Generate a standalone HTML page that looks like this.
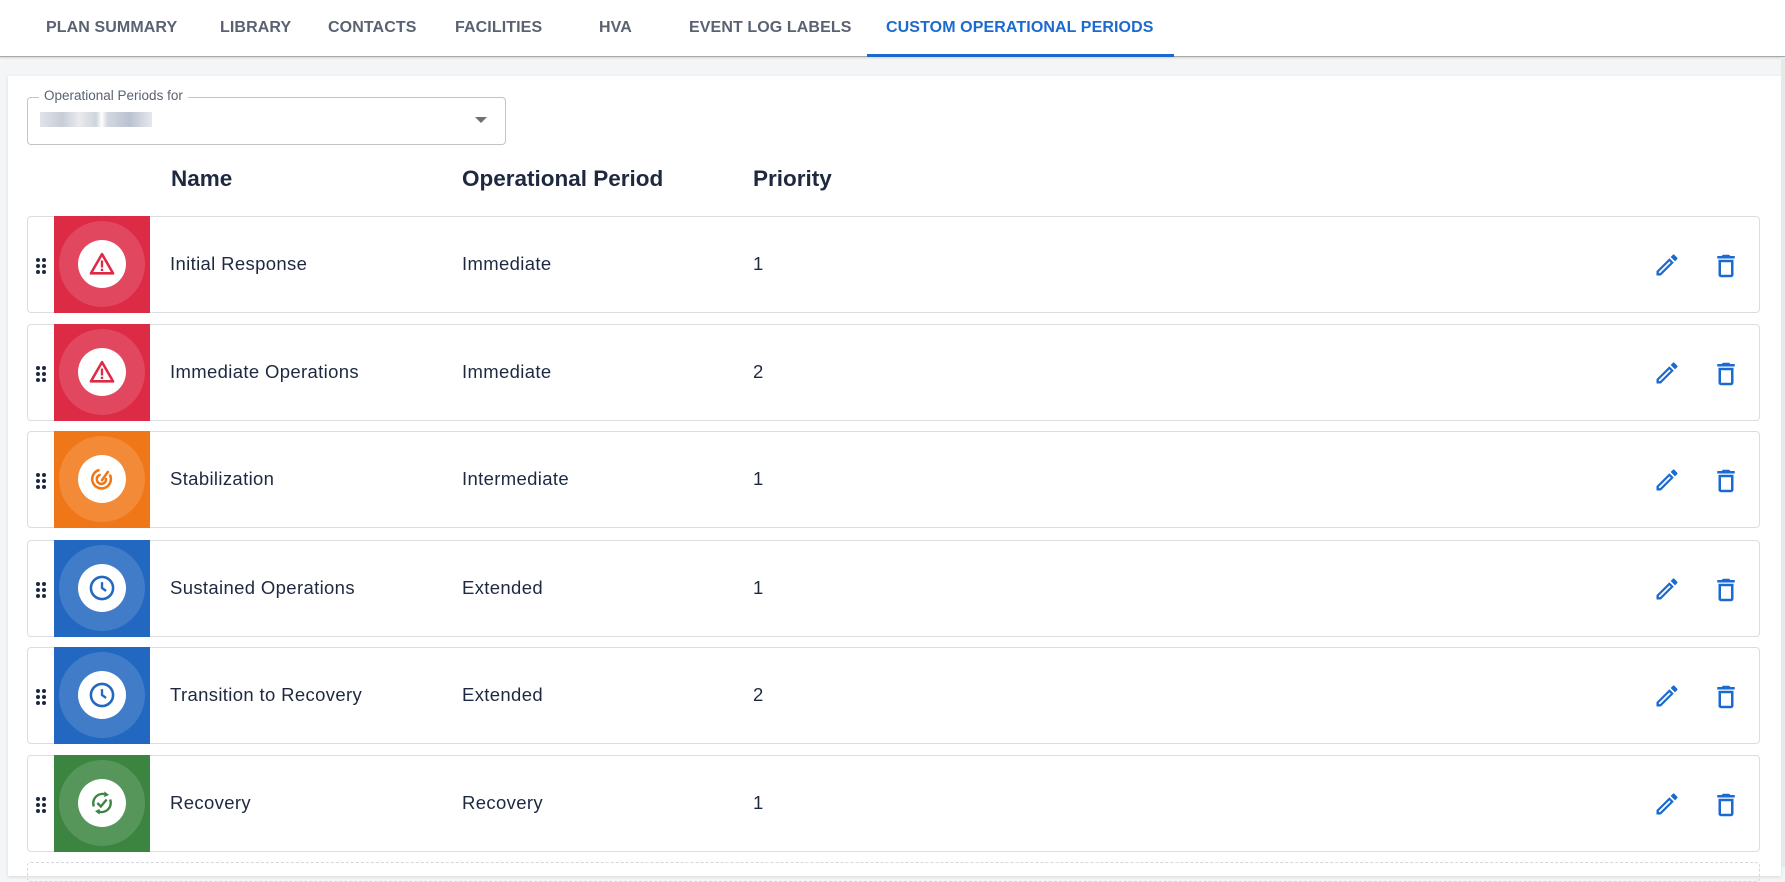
<!DOCTYPE html>
<html><head><meta charset="utf-8"><style>
*{box-sizing:border-box;margin:0;padding:0}
body{width:1785px;height:867px;overflow:hidden;background:#f4f5f7;font-family:"Liberation Sans",sans-serif;position:relative;color:#1e2940}
.top{position:absolute;left:0;top:0;width:1785px;height:57px;background:#fff;border-bottom:1px solid #a9a9a9;box-shadow:0 1px 2px rgba(0,0,0,.15)}
.tab{position:absolute;top:19px;font-size:16px;font-weight:bold;color:#5a6272;letter-spacing:.1px;white-space:nowrap}
.tab.act{color:#1b6ad0}
.ul{position:absolute;left:867px;top:54px;width:307px;height:3px;background:#1b6ad0}
.card{position:absolute;left:8px;top:76px;width:1773px;height:800px;background:#fff;box-shadow:0 1px 3px rgba(0,0,0,.12)}
.dd{position:absolute;left:27px;top:97px;width:479px;height:48px;border:1px solid #c4c4c4;border-radius:4px}
.lbl{position:absolute;left:39px;top:88px;background:#fff;padding:0 5px;font-size:13.5px;color:#5a6272}
.blur{position:absolute;left:40px;top:112px;width:112px;height:15px;background:linear-gradient(90deg,#d8dbe2,#b9c0cd 20%,#e4e6ea 35%,#c3c8d2 50%,#fff 55%,#c9ced7 60%,#a9b3c5 80%,#dfe2e8);opacity:.8}
.arr{position:absolute;left:475px;top:117px;width:0;height:0;border-left:6px solid transparent;border-right:6px solid transparent;border-top:6px solid #707070}
.h{position:absolute;top:166px;font-size:22.5px;font-weight:bold;color:#1e2940}
.row{position:absolute;left:27px;width:1733px;height:97px;border:1px solid #dcdde2;border-radius:4px;background:#fff}
.blk{position:absolute;left:26px;top:-1px;width:96px;height:97px;overflow:hidden}
.halo{position:absolute;left:5px;top:5px;width:86px;height:86px;border-radius:50%;background:rgba(255,255,255,.14)}
.wc{position:absolute;left:24px;top:24px;width:48px;height:48px;border-radius:50%;background:#fff}
.wc svg{position:absolute;left:10px;top:10px}
.t{position:absolute;top:36px;font-size:18.5px;color:#1e2940;letter-spacing:.35px}
.dots{position:absolute;left:7px;top:40px}
.ic{position:absolute;top:34px}
.dash{position:absolute;left:27px;top:862px;width:1733px;height:20px;border:1px dashed #d6d7dc;border-radius:4px}
.sb{position:absolute;left:1781px;top:57px;width:4px;height:810px;background:#e8e8e8}
</style></head><body>
<div class="top">
<span class="tab" style="left:46px">PLAN SUMMARY</span>
<span class="tab" style="left:220px">LIBRARY</span>
<span class="tab" style="left:328px">CONTACTS</span>
<span class="tab" style="left:455px">FACILITIES</span>
<span class="tab" style="left:599px">HVA</span>
<span class="tab" style="left:689px">EVENT LOG LABELS</span>
<span class="tab act" style="left:886px">CUSTOM OPERATIONAL PERIODS</span>
<div class="ul"></div>
</div>
<div class="card"></div>
<div class="sb"></div>
<div class="dd"></div><div class="lbl">Operational Periods for</div><div class="blur"></div><div class="arr"></div>
<div class="h" style="left:171px">Name</div>
<div class="h" style="left:462px">Operational Period</div>
<div class="h" style="left:753px">Priority</div>

<div class="row" style="top:216px"><svg class="dots" width="12" height="18"><g fill="#1e2940"><circle cx="3" cy="3" r="2"/><circle cx="9" cy="3" r="2"/><circle cx="3" cy="9" r="2"/><circle cx="9" cy="9" r="2"/><circle cx="3" cy="15" r="2"/><circle cx="9" cy="15" r="2"/></g></svg>
<div class="blk" style="background:#dd2b45"><div class="halo"></div><div class="wc"><svg width="28" height="28" viewBox="0 0 24 24"><path d="M12 3.5L2.5 20h19z" fill="none" stroke="#dd2b45" stroke-width="2.2" stroke-linejoin="round"/><rect x="11" y="9" width="2" height="6" fill="#dd2b45"/><rect x="11" y="16" width="2" height="2" fill="#dd2b45"/></svg></div></div>
<div class="t" style="left:142px">Initial Response</div><div class="t" style="left:434px">Immediate</div><div class="t" style="left:725px">1</div>
<svg class="ic" style="left:1625px" width="28" height="28" viewBox="0 0 24 24"><path d="M3 17.25V21h3.75L17.81 9.94l-3.75-3.75L3 17.25zM20.71 7.04a1 1 0 000-1.41l-2.34-2.34a1 1 0 00-1.41 0l-1.83 1.83 3.75 3.75 1.83-1.83z" fill="#1b6ad0"/><path d="M5 17.9L14.06 8.84l1.1 1.1L6.1 19H5z" fill="#fff"/></svg>
<svg class="ic" style="left:1683px" width="30" height="30" viewBox="0 0 24 24"><path d="M6 19a2 2 0 002 2h8a2 2 0 002-2V7H6v12zM8 9h8v10H8V9zm7.5-5l-1-1h-5l-1 1H5v2h14V4z" fill="#1b6ad0"/></svg></div>

<div class="row" style="top:324px"><svg class="dots" width="12" height="18"><g fill="#1e2940"><circle cx="3" cy="3" r="2"/><circle cx="9" cy="3" r="2"/><circle cx="3" cy="9" r="2"/><circle cx="9" cy="9" r="2"/><circle cx="3" cy="15" r="2"/><circle cx="9" cy="15" r="2"/></g></svg>
<div class="blk" style="background:#dd2b45"><div class="halo"></div><div class="wc"><svg width="28" height="28" viewBox="0 0 24 24"><path d="M12 3.5L2.5 20h19z" fill="none" stroke="#dd2b45" stroke-width="2.2" stroke-linejoin="round"/><rect x="11" y="9" width="2" height="6" fill="#dd2b45"/><rect x="11" y="16" width="2" height="2" fill="#dd2b45"/></svg></div></div>
<div class="t" style="left:142px">Immediate Operations</div><div class="t" style="left:434px">Immediate</div><div class="t" style="left:725px">2</div>
<svg class="ic" style="left:1625px" width="28" height="28" viewBox="0 0 24 24"><path d="M3 17.25V21h3.75L17.81 9.94l-3.75-3.75L3 17.25zM20.71 7.04a1 1 0 000-1.41l-2.34-2.34a1 1 0 00-1.41 0l-1.83 1.83 3.75 3.75 1.83-1.83z" fill="#1b6ad0"/><path d="M5 17.9L14.06 8.84l1.1 1.1L6.1 19H5z" fill="#fff"/></svg>
<svg class="ic" style="left:1683px" width="30" height="30" viewBox="0 0 24 24"><path d="M6 19a2 2 0 002 2h8a2 2 0 002-2V7H6v12zM8 9h8v10H8V9zm7.5-5l-1-1h-5l-1 1H5v2h14V4z" fill="#1b6ad0"/></svg></div>

<div class="row" style="top:431px"><svg class="dots" width="12" height="18"><g fill="#1e2940"><circle cx="3" cy="3" r="2"/><circle cx="9" cy="3" r="2"/><circle cx="3" cy="9" r="2"/><circle cx="9" cy="9" r="2"/><circle cx="3" cy="15" r="2"/><circle cx="9" cy="15" r="2"/></g></svg>
<div class="blk" style="background:#f07718"><div class="halo"></div><div class="wc"><svg width="28" height="28" viewBox="0 0 24 24"><g fill="none" stroke="#f07718" stroke-width="2.2" stroke-linecap="round"><path d="M9 4.5A8 8 0 1019 9"/><path d="M10 8.5A4 4 0 1015.5 12"/><path d="M12 13L17 6"/></g></svg></div></div>
<div class="t" style="left:142px">Stabilization</div><div class="t" style="left:434px">Intermediate</div><div class="t" style="left:725px">1</div>
<svg class="ic" style="left:1625px" width="28" height="28" viewBox="0 0 24 24"><path d="M3 17.25V21h3.75L17.81 9.94l-3.75-3.75L3 17.25zM20.71 7.04a1 1 0 000-1.41l-2.34-2.34a1 1 0 00-1.41 0l-1.83 1.83 3.75 3.75 1.83-1.83z" fill="#1b6ad0"/><path d="M5 17.9L14.06 8.84l1.1 1.1L6.1 19H5z" fill="#fff"/></svg>
<svg class="ic" style="left:1683px" width="30" height="30" viewBox="0 0 24 24"><path d="M6 19a2 2 0 002 2h8a2 2 0 002-2V7H6v12zM8 9h8v10H8V9zm7.5-5l-1-1h-5l-1 1H5v2h14V4z" fill="#1b6ad0"/></svg></div>

<div class="row" style="top:540px"><svg class="dots" width="12" height="18"><g fill="#1e2940"><circle cx="3" cy="3" r="2"/><circle cx="9" cy="3" r="2"/><circle cx="3" cy="9" r="2"/><circle cx="9" cy="9" r="2"/><circle cx="3" cy="15" r="2"/><circle cx="9" cy="15" r="2"/></g></svg>
<div class="blk" style="background:#2267c0"><div class="halo"></div><div class="wc"><svg width="28" height="28" viewBox="0 0 24 24"><circle cx="12" cy="12" r="9.5" fill="none" stroke="#2267c0" stroke-width="2.2"/><path d="M12 7v5l3.5 2.5" fill="none" stroke="#2267c0" stroke-width="2"/></svg></div></div>
<div class="t" style="left:142px">Sustained Operations</div><div class="t" style="left:434px">Extended</div><div class="t" style="left:725px">1</div>
<svg class="ic" style="left:1625px" width="28" height="28" viewBox="0 0 24 24"><path d="M3 17.25V21h3.75L17.81 9.94l-3.75-3.75L3 17.25zM20.71 7.04a1 1 0 000-1.41l-2.34-2.34a1 1 0 00-1.41 0l-1.83 1.83 3.75 3.75 1.83-1.83z" fill="#1b6ad0"/><path d="M5 17.9L14.06 8.84l1.1 1.1L6.1 19H5z" fill="#fff"/></svg>
<svg class="ic" style="left:1683px" width="30" height="30" viewBox="0 0 24 24"><path d="M6 19a2 2 0 002 2h8a2 2 0 002-2V7H6v12zM8 9h8v10H8V9zm7.5-5l-1-1h-5l-1 1H5v2h14V4z" fill="#1b6ad0"/></svg></div>

<div class="row" style="top:647px"><svg class="dots" width="12" height="18"><g fill="#1e2940"><circle cx="3" cy="3" r="2"/><circle cx="9" cy="3" r="2"/><circle cx="3" cy="9" r="2"/><circle cx="9" cy="9" r="2"/><circle cx="3" cy="15" r="2"/><circle cx="9" cy="15" r="2"/></g></svg>
<div class="blk" style="background:#2267c0"><div class="halo"></div><div class="wc"><svg width="28" height="28" viewBox="0 0 24 24"><circle cx="12" cy="12" r="9.5" fill="none" stroke="#2267c0" stroke-width="2.2"/><path d="M12 7v5l3.5 2.5" fill="none" stroke="#2267c0" stroke-width="2"/></svg></div></div>
<div class="t" style="left:142px">Transition to Recovery</div><div class="t" style="left:434px">Extended</div><div class="t" style="left:725px">2</div>
<svg class="ic" style="left:1625px" width="28" height="28" viewBox="0 0 24 24"><path d="M3 17.25V21h3.75L17.81 9.94l-3.75-3.75L3 17.25zM20.71 7.04a1 1 0 000-1.41l-2.34-2.34a1 1 0 00-1.41 0l-1.83 1.83 3.75 3.75 1.83-1.83z" fill="#1b6ad0"/><path d="M5 17.9L14.06 8.84l1.1 1.1L6.1 19H5z" fill="#fff"/></svg>
<svg class="ic" style="left:1683px" width="30" height="30" viewBox="0 0 24 24"><path d="M6 19a2 2 0 002 2h8a2 2 0 002-2V7H6v12zM8 9h8v10H8V9zm7.5-5l-1-1h-5l-1 1H5v2h14V4z" fill="#1b6ad0"/></svg></div>

<div class="row" style="top:755px"><svg class="dots" width="12" height="18"><g fill="#1e2940"><circle cx="3" cy="3" r="2"/><circle cx="9" cy="3" r="2"/><circle cx="3" cy="9" r="2"/><circle cx="9" cy="9" r="2"/><circle cx="3" cy="15" r="2"/><circle cx="9" cy="15" r="2"/></g></svg>
<div class="blk" style="background:#3b8541"><div class="halo"></div><div class="wc"><svg width="28" height="28" viewBox="0 0 24 24"><g fill="none" stroke="#3b8541" stroke-width="2"><path d="M5 15A8 8 0 0116 5"/><path d="M19 9A8 8 0 018 19"/><path d="M8 12l3 3 5-6"/></g><path d="M14 2l4 3-4 2z M10 22l-4-3 4-2z" fill="#3b8541"/></svg></div></div>
<div class="t" style="left:142px">Recovery</div><div class="t" style="left:434px">Recovery</div><div class="t" style="left:725px">1</div>
<svg class="ic" style="left:1625px" width="28" height="28" viewBox="0 0 24 24"><path d="M3 17.25V21h3.75L17.81 9.94l-3.75-3.75L3 17.25zM20.71 7.04a1 1 0 000-1.41l-2.34-2.34a1 1 0 00-1.41 0l-1.83 1.83 3.75 3.75 1.83-1.83z" fill="#1b6ad0"/><path d="M5 17.9L14.06 8.84l1.1 1.1L6.1 19H5z" fill="#fff"/></svg>
<svg class="ic" style="left:1683px" width="30" height="30" viewBox="0 0 24 24"><path d="M6 19a2 2 0 002 2h8a2 2 0 002-2V7H6v12zM8 9h8v10H8V9zm7.5-5l-1-1h-5l-1 1H5v2h14V4z" fill="#1b6ad0"/></svg></div>
<div class="dash"></div>
</body></html>
